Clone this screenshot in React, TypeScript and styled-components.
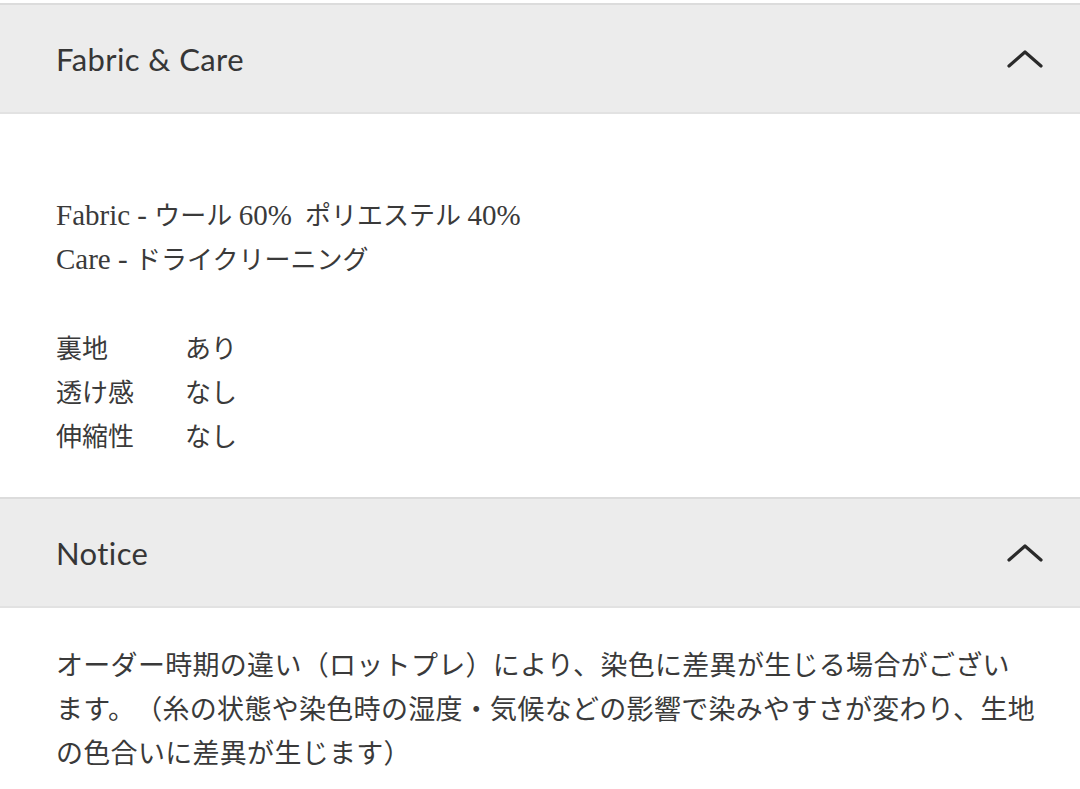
import { FC, ReactNode } from 'react';
import styled, { createGlobalStyle } from 'styled-components';

const GlobalStyle = createGlobalStyle`
  html, body {
    margin: 0;
    padding: 0;
    background: #ffffff;
  }
`;

const Page = styled.div`
  width: 1080px;
  padding-top: 3px;
  background: #ffffff;
`;

const Section = styled.section`
  display: flex;
  flex-direction: column;
`;

const Header = styled.div`
  display: flex;
  align-items: center;
  justify-content: space-between;
  height: 107px;
  padding: 0 36px 0 56px;
  background: #ececec;
  border-top: 2px solid #dcdcdc;
  border-bottom: 2px solid #e2e2e2;
`;

const Title = styled.h2`
  margin: 0;
  font-family: 'Lato', 'Noto Sans', sans-serif;
  font-weight: 400;
  font-size: 31px;
  letter-spacing: 0.4px;
  color: #363636;
`;

const Chevron = styled.svg`
  width: 38px;
  height: 20px;
  flex: none;
`;

const Body = styled.div<{ $top: number; $bottom: number }>`
  padding: ${(p) => p.$top}px 40px ${(p) => p.$bottom}px 56px;
  font-family: 'Liberation Serif', 'Noto Sans CJK JP', serif;
  color: #3a3a3a;
  text-spacing-trim: space-all;
`;

const Line = styled.div`
  height: 44px;
  font-size: 26px;
  line-height: 44px;
  white-space: nowrap;
`;

const Latin = styled.span`
  font-size: 29px;
  line-height: 1;
`;

const Spacer = styled.div`
  height: 45px;
`;

const SpecRow = styled.div`
  display: grid;
  grid-template-columns: 129px auto;
  font-size: 26px;
  line-height: 44px;
`;

const Paragraph = styled.p`
  margin: 0;
  font-size: 27px;
  line-height: 44px;
  letter-spacing: 0.3px;
  white-space: nowrap;
`;

const AccordionSection: FC<{ title: string; children: ReactNode }> = ({
  title,
  children,
}) => (
  <Section>
    <Header>
      <Title>{title}</Title>
      <Chevron viewBox="0 0 38 20" aria-hidden="true">
        <polyline
          points="3,17 19,3 35,17"
          fill="none"
          stroke="#2a2a2a"
          strokeWidth="3.2"
          strokeLinecap="round"
          strokeLinejoin="round"
        />
      </Chevron>
    </Header>
    {children}
  </Section>
);

const specs = [
  { label: '裏地', value: 'あり' },
  { label: '透け感', value: 'なし' },
  { label: '伸縮性', value: 'なし' },
];

const App: FC = () => (
  <Page>
    <GlobalStyle />
    <AccordionSection title="Fabric & Care">
      <Body $top={81} $bottom={37}>
        <Line>
          <Latin>Fabric - </Latin>ウール <Latin>60%</Latin>&nbsp;&nbsp;ポリエステル{' '}
          <Latin>40%</Latin>
        </Line>
        <Line>
          <Latin>Care - </Latin>ドライクリーニング
        </Line>
        <Spacer />
        {specs.map((s) => (
          <SpecRow key={s.label}>
            <span>{s.label}</span>
            <span>{s.value}</span>
          </SpecRow>
        ))}
      </Body>
    </AccordionSection>
    <AccordionSection title="Notice">
      <Body $top={36} $bottom={20}>
        <Paragraph>
          オーダー時期の違い（ロットプレ）により、染色に差異が生じる場合がござい
          <br />
          ます。（糸の状態や染色時の湿度・気候などの影響で染みやすさが変わり、生地
          <br />
          の色合いに差異が生じます）
        </Paragraph>
      </Body>
    </AccordionSection>
  </Page>
);

export default App;
